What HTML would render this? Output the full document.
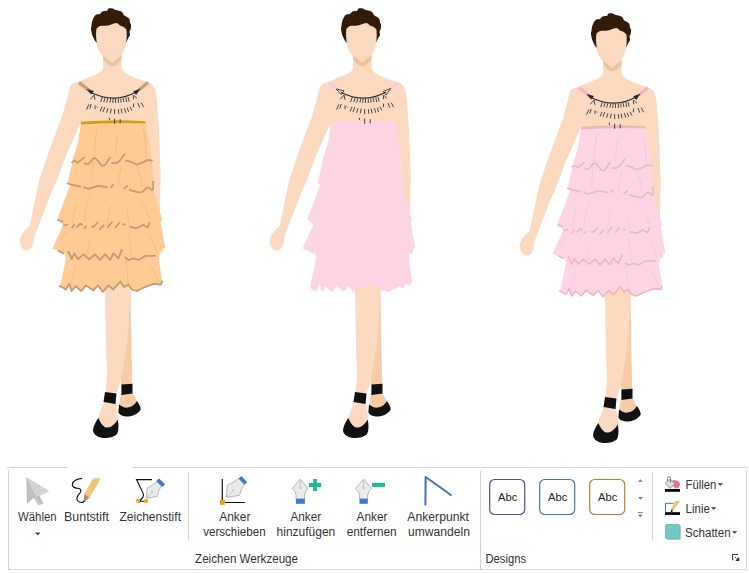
<!DOCTYPE html>
<html><head><meta charset="utf-8">
<style>
html,body{margin:0;padding:0;background:#fff;width:749px;height:573px;overflow:hidden;position:relative;font-family:"Liberation Sans",sans-serif;}
#figs{position:absolute;left:0;top:0;}
.rb{position:absolute;background:#d4d4d4;}
svg.ic{position:absolute;}
</style></head><body>
<svg id="figs" width="749" height="460" viewBox="0 0 749 460">

<g>
  <path fill="#FBDABF" d="M70,86.5 L68.4,93 L62.8,114 L47.7,155 L39.3,180 L29.6,226 C25,230 20,235 19.8,241 C20,247 23,250.5 26.8,250.5 C30,250.5 33,247 33.5,243 L34.6,236 L50,196 L57,180 L65,158 L81,122 L95,110 L88,90 Z"/>
  <path fill="#FBDABF" d="M70,86.5 C71,84.5 72.5,83.6 74.5,83 L78,82 L85,79 C90,77 95,75 98,73.5 C101,72 103,70 103.2,67 L103,50 L121.5,50 L121.6,67 C122,70 124,72.5 127,74 L135,78 L147,82 C151,83 153,85 154.5,88 C156.5,93 157,100 157.5,108 L159,130 L160.6,175 L160,215 L159,245 C161.5,245.3 163.2,248 163.2,250.5 C162.8,253.2 160,254.2 157,253.5 L150,250 L81,122 Z"/>
  <path fill="#FBDABF" d="M96.2,22 L126.5,22 C127.3,32 127,40 125.8,45.5 C124.6,50 122.6,53 120.6,55.2 L113.5,61.8 C112.7,62.6 111.7,62.6 110.9,61.9 L103,56 C100.5,53.5 98.8,51 97.8,48.5 C96.3,44 95.8,36 96.2,22 Z"/>
  <path fill="#E8C39D" d="M103,55.5 L110.9,61.9 C111.7,62.6 112.7,62.6 113.5,61.8 L121.5,54.8 L121.6,59.5 C119.5,62 116.5,66.3 112.3,66.4 C108.5,66.3 105.5,62 103.2,59 Z"/>
  <path fill="#331B09" d="M108.4,8.6 C110,8 111,8.2 112,8.3 C113.5,8.5 114,9.3 115,9.8 C116.5,10.4 118,10.3 119.2,10.7 C120.7,11.2 121.6,11.6 122.3,12.2 C123.5,13.4 123.3,14.6 124,15.2 C125,16 126.3,16.3 127,17 C128.5,17.8 129.2,18.5 129.5,19.4 C130,20.5 129.7,21.6 130,22.4 C130.4,23.3 131,24 131,24.8 C131.2,26.3 130.8,27.8 130.7,29 C130.6,30 129.6,30.7 129.5,31.4 C129.5,32.5 130.2,34 130,35 C129.8,36.3 128.8,37 128.3,37.8 L126.2,42.7 C126.8,38 126.8,33 126.5,30 C126,28.5 125.5,28.4 125.3,28.4 C124.5,27.5 123.5,27 122.9,26.6 C121.5,26.2 120.5,25.8 119.9,25.4 C118.5,24.2 117.5,23 116.2,23 C113,23.3 110.5,25 107.8,25.4 C104.5,25.7 102,25.5 100,26 C98,27 97,28 96.4,29 C95.8,33 96,38 96.9,43 L94.8,40.6 C93.8,38.5 93,37 92.2,35 C91.8,34 91.6,33 91.6,32 C91.2,31 91,30 91,29 C91,27.5 91.6,26 91.6,24.8 C91.6,23.5 91.9,22.3 92.2,21.2 C92.6,20 93,19 93.4,18.2 C94.2,16.8 95.3,15.2 96.4,14.6 C97.6,14 99,14.6 100,14 C101,13.3 101.4,12.2 102.4,11.6 C103.8,10.8 106,11.3 107.2,10.7 C107.8,10.2 107.8,9 108.4,8.6 Z"/>
  <path fill="#F6CCA8" d="M119.5,280 L130.2,280 L131.2,335 L132.2,385 L121,385 L120.5,360 Z"/>
  <path fill="#FBDABF" d="M104.8,280 L129.8,280 L129.6,305 C129.3,325 127,345 123.5,365 L120.1,383.4 L116.5,393 L105.5,393 L107,375 L106,345 Z"/>
  <path fill="#F6CCA8" d="M121,393 L132.5,393 L137,401.5 L128,409.5 L119,405.5 Z"/>
  <path fill="#FBDABF" d="M104,402 L116,403 L118.5,420.5 L107.3,429 L97.6,419 Z"/>
  <path fill="#111" d="M105,392 L116.5,393.5 L115.5,404 L103.5,402 Z"/>
  <path fill="#111" d="M121.4,384.5 L132.5,383.8 L132.5,393.4 L121.4,395 Z"/>
  <path fill="#111" d="M119,404.5 C122,407 125,408 128,407.5 C132,407 135,404 137,401 C139,404 141,407 140.7,409.5 C139,413 134,416 128,416.5 C123,416.5 119,415 118.4,412 Z"/>
  <path fill="#111" d="M98.4,418 C101,424 104,427.5 107.3,427.6 C111,427.5 115,424 117.7,419.4 C118.8,424 119,430 117,434.3 C113,437.5 108,438.5 102.8,438 C97,437 93,434 93,430 C93.5,426 96,421 98.4,418 Z"/>

<path stroke="#C9A07A" stroke-width="3.3" d="M79,82.6 L90,91 M148,82.6 L139,90"/>
<path fill="none" stroke="#2a2a2a" stroke-width="1.1" d="M91,92.5 Q114.6,104 136,92"/>
  <path fill="#2a2a2a" d="M86.3,89 L94,90.9 L91.2,94.6 Z M140.7,88.5 L133.3,91.3 L136.1,95.1 Z"/>
  <path stroke="#2a2a2a" stroke-width="0.85" fill="none" d="M90.3,99.3 L94,95.1 L95,99.8 M102.4,97 L100.6,102.1 M105.2,97.4 L103.8,102.1 M108,97.9 L106.6,102.6 M110.8,98.4 L109.9,102.6 M113.2,98.6 L112.7,103 M115.5,98.6 L115.5,103 M118.3,98.4 L118.3,103 M120.7,98.4 L121.1,102.6 M123,97.9 L123.9,102.1 M125.8,97.4 L126.7,102.1 M128.1,97 L129.1,101.6 M133.3,95.1 L133.7,99.3 M134.2,95.6 L137,98.4 M88.9,104.4 L86.5,109.6 M91.2,104 L89.8,108.6 M95,105.4 L95,109.1 M96.8,106.5 L97.3,107.5 M102,106.8 L100.1,111.4 M104.8,107.2 L102.9,111.9 M108,108.2 L106.6,112.8 M111.3,108.6 L110.4,113.3 M114.6,109.1 L114.6,114.2 M118.3,109.1 L118.8,113.8 M121.1,108.6 L122.1,113.3 M124.4,108.2 L125.8,112.8 M127.2,107.7 L128.6,111.9 M130,106.8 L131.9,110.5 M133.7,103.5 L133.3,107.2 M137.9,103 L139.8,107.7 M141.2,102.6 L143.6,107.2 "/>
<path fill="#FECB94" d="M64,245 L160,245 L159,261.4 L162.2,281.4 L160.6,284.6 L154.2,283.8 L149.4,285.4 L143,287.9 L136.5,291 L131.7,289.5 L128.5,284.6 L123.7,287 L120.5,281.4 L113.3,289.5 L108.5,285.4 L102.9,291.9 L98,285.4 L93.3,290.3 L86,285.4 L81.3,291 L75.6,286.2 L71.6,291 L69.2,283.8 L66,289.5 L63.6,287.9 L59.6,286.2 L60.4,285.4 L66,258.2 Z"/>
<path fill="#FECB94" d="M64,212 L158,212 L160.2,220 L165.2,247.5 L160,250 L155.2,255.9 L145.2,255.9 L138.5,260 L133.5,258.4 L128.5,260 L125.1,257.6 L121.8,250 L118.4,258.4 L113.4,253.4 L110.1,260 L105.1,254.2 L100.1,260 L95.1,254.2 L89.2,259.2 L83.4,254.2 L78.4,259.2 L74.2,253.4 L71.7,259.2 L68.4,251.7 L63.4,253.4 L58.4,250.9 L52.5,248.4 L63.4,225 Z"/>
<path fill="#FECB94" d="M72,178 L151,178 L153.5,190 L162.2,220.3 L159,222.7 L149.4,222.7 L147.8,227.5 L143,225 L136.5,228.3 L130.1,226.7 L123.7,224.3 L119.7,222.7 L115.7,227.5 L112.5,221.9 L107.7,227.5 L101.3,229 L96.5,221.9 L91.7,226 L84.5,227.5 L80.4,228.3 L77.2,223.5 L72.4,228 L66,226.7 L62.8,224.3 L57.2,219.5 L69.2,188 Z"/>
<path fill="#FECB94" d="M76,150 L150,150 L152,163 L153.2,181.6 L152.5,189.9 L147.4,187.3 L141.1,192.4 L129.7,189.9 L127.2,186 L124,188.6 L112,186 L106.9,187.3 L98,186 L89.1,188.6 L84,187.3 L80.2,186.7 L72.6,184.8 L67.5,183.5 L72,164 Z"/>
<path fill="#FECB94" d="M80.7,121.5 L145.5,121.5 L146,125 L151.9,160.7 L147.4,160 L142.4,162.6 L136.7,164.5 L131,162 L125.9,160.7 L124.6,154.3 L118.3,162 L112,163.2 L110,157.5 L103,165.8 L94.8,158.1 L88.5,163.9 L84.7,163.2 L84,157.5 L77.7,162.6 L75.1,160.7 L72,162 L78.2,142 L80.7,125 Z"/>
<path fill="none" stroke="#E8B283" stroke-width="0.6" d="M94.8,148 Q92,165 91.6,182.2 M117,136 Q116,146 115.7,155.6 M121.4,165.8 Q119,176 118.3,186 M137.3,167 Q141,177 142.4,187.3 M143.5,128 Q145.5,140 146.2,158 M97,128 Q95,138 94.8,148 M76.4,204.2 Q73,213 72.4,223.5 M90.9,194.6 Q85,207 83.7,221.9 M110.9,205.8 Q108,215 107.7,225 M126.9,210.6 Q128.5,217 128.5,223.5 M141.3,201 Q147,209 149.4,218.7 M66,232 Q62,236 61.7,240 M90,240 Q88,247 87.6,254.2 M128.5,233.4 Q130.5,244 131,255.9 M148.5,235 Q155,243 156.9,253.4 M75.6,267.8 Q72,275 70.8,283.8 M125.3,259.8 Q128,272 128.5,285.4 M149.4,264.6 Q156,272 159,282.2"/>
<path fill="none" stroke="#C59A75" stroke-width="1.8" stroke-linejoin="round" stroke-linecap="round" d="M72.0,162.0 C72.52,161.78 74.15,160.60 75.1,160.7 C76.05,160.80 76.22,163.13 77.7,162.6 C79.18,162.07 82.95,158.35 84.0,157.5"/>
<path fill="none" stroke="#C59A75" stroke-width="1.8" stroke-linejoin="round" stroke-linecap="round" d="M84.7,163.2 C85.33,163.32 86.82,164.75 88.5,163.9 C90.18,163.05 92.38,157.78 94.8,158.1 C97.22,158.42 100.47,165.90 103.0,165.8 C105.53,165.70 108.83,158.88 110.0,157.5"/>
<path fill="none" stroke="#C59A75" stroke-width="1.8" stroke-linejoin="round" stroke-linecap="round" d="M112.0,163.2 C113.05,163.00 116.20,163.48 118.3,162.0 C120.40,160.52 123.55,155.58 124.6,154.3"/>
<path fill="none" stroke="#C59A75" stroke-width="1.8" stroke-linejoin="round" stroke-linecap="round" d="M125.9,160.7 C126.75,160.92 129.20,161.37 131.0,162.0 C132.80,162.63 134.80,164.40 136.7,164.5 C138.60,164.60 140.62,163.35 142.4,162.6 C144.18,161.85 145.82,160.32 147.4,160.0 C148.98,159.68 151.15,160.58 151.9,160.7"/>
<path fill="none" stroke="#C59A75" stroke-width="1.8" stroke-linejoin="round" stroke-linecap="round" d="M67.5,183.5 C68.35,183.72 70.48,184.27 72.6,184.8 C74.72,185.33 78.93,186.38 80.2,186.7"/>
<path fill="none" stroke="#C59A75" stroke-width="1.8" stroke-linejoin="round" stroke-linecap="round" d="M84.0,187.3 C84.85,187.52 86.77,188.82 89.1,188.6 C91.43,188.38 95.03,186.22 98.0,186.0 C100.97,185.78 105.42,187.08 106.9,187.3"/>
<path fill="none" stroke="#C59A75" stroke-width="1.8" stroke-linejoin="round" stroke-linecap="round" d="M111.0,187.3 L113.0,185.0"/>
<path fill="none" stroke="#C59A75" stroke-width="1.8" stroke-linejoin="round" stroke-linecap="round" d="M124.0,188.6 L127.2,186.0"/>
<path fill="none" stroke="#C59A75" stroke-width="1.8" stroke-linejoin="round" stroke-linecap="round" d="M129.7,189.9 C131.60,190.32 138.15,192.83 141.1,192.4 C144.05,191.97 145.50,187.72 147.4,187.3 C149.30,186.88 151.53,190.85 152.5,189.9 C153.47,188.95 153.08,182.98 153.2,181.6"/>
<polyline fill="none" stroke="#C59A75" stroke-width="1.8" stroke-linejoin="round" stroke-linecap="round" points="58,220 62.5,221.5"/>
<polyline fill="none" stroke="#C59A75" stroke-width="1.8" stroke-linejoin="round" stroke-linecap="round" points="63.8,225.5 67.5,224.5"/>
<polyline fill="none" stroke="#C59A75" stroke-width="1.8" stroke-linejoin="round" stroke-linecap="round" points="72.3,227.6 74.2,224.8"/>
<polyline fill="none" stroke="#C59A75" stroke-width="1.8" stroke-linejoin="round" stroke-linecap="round" points="77,227.1 80.2,223.4 82.1,224.8"/>
<polyline fill="none" stroke="#C59A75" stroke-width="1.8" stroke-linejoin="round" stroke-linecap="round" points="84.4,228.1 85.8,226.7"/>
<polyline fill="none" stroke="#C59A75" stroke-width="1.8" stroke-linejoin="round" stroke-linecap="round" points="91.9,226.7 93.5,227 97.5,222.5"/>
<polyline fill="none" stroke="#C59A75" stroke-width="1.8" stroke-linejoin="round" stroke-linecap="round" points="99.9,229 103.6,225.3"/>
<polyline fill="none" stroke="#C59A75" stroke-width="1.8" stroke-linejoin="round" stroke-linecap="round" points="107.8,227.1 112,222"/>
<polyline fill="none" stroke="#C59A75" stroke-width="1.8" stroke-linejoin="round" stroke-linecap="round" points="115.7,227.1 119.5,222.5"/>
<polyline fill="none" stroke="#C59A75" stroke-width="1.8" stroke-linejoin="round" stroke-linecap="round" points="123.5,224.5 125,224.3"/>
<polyline fill="none" stroke="#C59A75" stroke-width="1.8" stroke-linejoin="round" stroke-linecap="round" points="130.1,226.7 136.5,228.3 143,225 147.8,227.5 149.4,222.7"/>
<polyline fill="none" stroke="#C59A75" stroke-width="1.8" stroke-linejoin="round" stroke-linecap="round" points="58.4,250.9 63.4,253.4"/>
<polyline fill="none" stroke="#C59A75" stroke-width="1.8" stroke-linejoin="round" stroke-linecap="round" points="68.4,251.7 71.7,259.2 74.2,253.4 78.4,259.2 83.4,254.2 89.2,259.2 95.1,254.2 100.1,260 105.1,254.2 110.1,260 113.4,253.4 118.4,258.4 121.8,250"/>
<polyline fill="none" stroke="#C59A75" stroke-width="1.8" stroke-linejoin="round" stroke-linecap="round" points="125.1,257.6 128.5,260 133.5,258.4 138.5,260 145.2,255.9 155.2,255.9"/>
<polyline fill="none" stroke="#C59A75" stroke-width="1.8" stroke-linejoin="round" stroke-linecap="round" points="162.2,281.4 160.6,284.6 154.2,283.8 149.4,285.4 143,287.9 136.5,291 131.7,289.5 128.5,284.6 123.7,287 120.5,281.4 113.3,289.5 108.5,285.4 102.9,291.9 98,285.4 93.3,290.3 86,285.4 81.3,291 75.6,286.2 71.6,291 69.2,283.8 66,289.5 63.6,287.9 59.6,286.2"/>
<path fill="#D4A012" d="M80.9,121.7 Q114.6,118.8 145.4,121.3 L145.4,123.6 Q114.6,122.2 80.9,124.6 Z"/>

<path stroke="#2a2a2a" stroke-width="0.85" fill="none" d="M109.4,117.8 L109.4,120 M114.6,118.6 L114.6,123.8 M120.2,119.2 L120.2,123.3"/></g>
<g transform="translate(250,0)">
  <path fill="#FBDABF" d="M70,86.5 L68.4,93 L62.8,114 L47.7,155 L39.3,180 L29.6,226 C25,230 20,235 19.8,241 C20,247 23,250.5 26.8,250.5 C30,250.5 33,247 33.5,243 L34.6,236 L50,196 L57,180 L65,158 L81,122 L95,110 L88,90 Z"/>
  <path fill="#FBDABF" d="M70,86.5 C71,84.5 72.5,83.6 74.5,83 L78,82 L85,79 C90,77 95,75 98,73.5 C101,72 103,70 103.2,67 L103,50 L121.5,50 L121.6,67 C122,70 124,72.5 127,74 L135,78 L147,82 C151,83 153,85 154.5,88 C156.5,93 157,100 157.5,108 L159,130 L160.6,175 L160,215 L159,245 C161.5,245.3 163.2,248 163.2,250.5 C162.8,253.2 160,254.2 157,253.5 L150,250 L81,122 Z"/>
  <path fill="#FBDABF" d="M96.2,22 L126.5,22 C127.3,32 127,40 125.8,45.5 C124.6,50 122.6,53 120.6,55.2 L113.5,61.8 C112.7,62.6 111.7,62.6 110.9,61.9 L103,56 C100.5,53.5 98.8,51 97.8,48.5 C96.3,44 95.8,36 96.2,22 Z"/>
  <path fill="#E8C39D" d="M103,55.5 L110.9,61.9 C111.7,62.6 112.7,62.6 113.5,61.8 L121.5,54.8 L121.6,59.5 C119.5,62 116.5,66.3 112.3,66.4 C108.5,66.3 105.5,62 103.2,59 Z"/>
  <path fill="#331B09" d="M108.4,8.6 C110,8 111,8.2 112,8.3 C113.5,8.5 114,9.3 115,9.8 C116.5,10.4 118,10.3 119.2,10.7 C120.7,11.2 121.6,11.6 122.3,12.2 C123.5,13.4 123.3,14.6 124,15.2 C125,16 126.3,16.3 127,17 C128.5,17.8 129.2,18.5 129.5,19.4 C130,20.5 129.7,21.6 130,22.4 C130.4,23.3 131,24 131,24.8 C131.2,26.3 130.8,27.8 130.7,29 C130.6,30 129.6,30.7 129.5,31.4 C129.5,32.5 130.2,34 130,35 C129.8,36.3 128.8,37 128.3,37.8 L126.2,42.7 C126.8,38 126.8,33 126.5,30 C126,28.5 125.5,28.4 125.3,28.4 C124.5,27.5 123.5,27 122.9,26.6 C121.5,26.2 120.5,25.8 119.9,25.4 C118.5,24.2 117.5,23 116.2,23 C113,23.3 110.5,25 107.8,25.4 C104.5,25.7 102,25.5 100,26 C98,27 97,28 96.4,29 C95.8,33 96,38 96.9,43 L94.8,40.6 C93.8,38.5 93,37 92.2,35 C91.8,34 91.6,33 91.6,32 C91.2,31 91,30 91,29 C91,27.5 91.6,26 91.6,24.8 C91.6,23.5 91.9,22.3 92.2,21.2 C92.6,20 93,19 93.4,18.2 C94.2,16.8 95.3,15.2 96.4,14.6 C97.6,14 99,14.6 100,14 C101,13.3 101.4,12.2 102.4,11.6 C103.8,10.8 106,11.3 107.2,10.7 C107.8,10.2 107.8,9 108.4,8.6 Z"/>
  <path fill="#F6CCA8" d="M119.5,280 L130.2,280 L131.2,335 L132.2,385 L121,385 L120.5,360 Z"/>
  <path fill="#FBDABF" d="M104.8,280 L129.8,280 L129.6,305 C129.3,325 127,345 123.5,365 L120.1,383.4 L116.5,393 L105.5,393 L107,375 L106,345 Z"/>
  <path fill="#F6CCA8" d="M121,393 L132.5,393 L137,401.5 L128,409.5 L119,405.5 Z"/>
  <path fill="#FBDABF" d="M104,402 L116,403 L118.5,420.5 L107.3,429 L97.6,419 Z"/>
  <path fill="#111" d="M105,392 L116.5,393.5 L115.5,404 L103.5,402 Z"/>
  <path fill="#111" d="M121.4,384.5 L132.5,383.8 L132.5,393.4 L121.4,395 Z"/>
  <path fill="#111" d="M119,404.5 C122,407 125,408 128,407.5 C132,407 135,404 137,401 C139,404 141,407 140.7,409.5 C139,413 134,416 128,416.5 C123,416.5 119,415 118.4,412 Z"/>
  <path fill="#111" d="M98.4,418 C101,424 104,427.5 107.3,427.6 C111,427.5 115,424 117.7,419.4 C118.8,424 119,430 117,434.3 C113,437.5 108,438.5 102.8,438 C97,437 93,434 93,430 C93.5,426 96,421 98.4,418 Z"/>

<path stroke="#FBCBDC" stroke-width="3.3" d="M79,82.6 L90,91 M148,82.6 L139,90"/>
<path fill="none" stroke="#2a2a2a" stroke-width="1.1" d="M91,92.5 Q114.6,104 136,92"/>
  <path fill="none" stroke="#2a2a2a" stroke-width="0.8" stroke-linejoin="round" d="M86.3,89 L94,90.9 L91.2,94.6 Z M140.7,88.5 L133.3,91.3 L136.1,95.1 Z"/>
  <path stroke="#2a2a2a" stroke-width="0.85" fill="none" d="M90.3,99.3 L94,95.1 L95,99.8 M102.4,97 L100.6,102.1 M105.2,97.4 L103.8,102.1 M108,97.9 L106.6,102.6 M110.8,98.4 L109.9,102.6 M113.2,98.6 L112.7,103 M115.5,98.6 L115.5,103 M118.3,98.4 L118.3,103 M120.7,98.4 L121.1,102.6 M123,97.9 L123.9,102.1 M125.8,97.4 L126.7,102.1 M128.1,97 L129.1,101.6 M133.3,95.1 L133.7,99.3 M134.2,95.6 L137,98.4 M88.9,104.4 L86.5,109.6 M91.2,104 L89.8,108.6 M95,105.4 L95,109.1 M96.8,106.5 L97.3,107.5 M102,106.8 L100.1,111.4 M104.8,107.2 L102.9,111.9 M108,108.2 L106.6,112.8 M111.3,108.6 L110.4,113.3 M114.6,109.1 L114.6,114.2 M118.3,109.1 L118.8,113.8 M121.1,108.6 L122.1,113.3 M124.4,108.2 L125.8,112.8 M127.2,107.7 L128.6,111.9 M130,106.8 L131.9,110.5 M133.7,103.5 L133.3,107.2 M137.9,103 L139.8,107.7 M141.2,102.6 L143.6,107.2 "/>
<path fill="#FDD5E4" d="M64,245 L160,245 L159,261.4 L162.2,281.7 L160.6,284 L158,285.5 L155.8,283.3 L153.5,288.5 L149.4,286.5 L146,288.5 L143.8,289 L140.5,290.8 L138,292.3 L134.8,290.2 L131.7,291.5 L130,287 L128.5,284.9 L125.8,287.8 L123.7,288.3 L121.8,285 L120.5,282.5 L116,286.5 L111.7,288.5 L109.6,286.3 L107.7,285.5 L105.8,289.5 L103,293 L100.8,288.5 L98,286.3 L95.8,289.5 L93.3,291.5 L89.8,288.5 L86,286.3 L84.2,289.5 L82,292.3 L78.8,289.3 L75.6,286.3 L73.8,289.5 L71.6,291.5 L70.6,287.5 L69.2,283.8 L67.8,288.5 L66,291.5 L64,290.5 L62,289.7 L59.6,286.5 L60.4,285.4 L66,258.2 Z"/>
<path fill="#FDD5E4" d="M64,212 L158,212 L160.2,220 L165.2,247.5 L160,250 L155.2,255.9 L145.2,255.9 L138.5,260 L133.5,258.4 L128.5,260 L125.1,257.6 L121.8,250 L118.4,258.4 L113.4,253.4 L110.1,260 L105.1,254.2 L100.1,260 L95.1,254.2 L89.2,259.2 L83.4,254.2 L78.4,259.2 L74.2,253.4 L71.7,259.2 L68.4,251.7 L63.4,253.4 L58.4,250.9 L52.5,248.4 L63.4,225 Z"/>
<path fill="#FDD5E4" d="M72,178 L151,178 L153.5,190 L162.2,220.3 L159,222.7 L149.4,222.7 L147.8,227.5 L143,225 L136.5,228.3 L130.1,226.7 L123.7,224.3 L119.7,222.7 L115.7,227.5 L112.5,221.9 L107.7,227.5 L101.3,229 L96.5,221.9 L91.7,226 L84.5,227.5 L80.4,228.3 L77.2,223.5 L72.4,228 L66,226.7 L62.8,224.3 L57.2,219.5 L69.2,188 Z"/>
<path fill="#FDD5E4" d="M76,150 L150,150 L152,163 L153.2,181.6 L152.5,189.9 L147.4,187.3 L141.1,192.4 L129.7,189.9 L127.2,186 L124,188.6 L112,186 L106.9,187.3 L98,186 L89.1,188.6 L84,187.3 L80.2,186.7 L72.6,184.8 L67.5,183.5 L72,164 Z"/>
<path fill="#FDD5E4" d="M80.7,121.5 L145.5,121.5 L146,125 L151.9,160.7 L147.4,160 L142.4,162.6 L136.7,164.5 L131,162 L125.9,160.7 L124.6,154.3 L118.3,162 L112,163.2 L110,157.5 L103,165.8 L94.8,158.1 L88.5,163.9 L84.7,163.2 L84,157.5 L77.7,162.6 L75.1,160.7 L72,162 L78.2,142 L80.7,125 Z"/>

<path fill="#FDD5E4" d="M79.5,122.4 Q114.4,119.6 145,121.7 L146,126 L80,126 Z"/>
<path stroke="#2a2a2a" stroke-width="0.85" fill="none" d="M109.4,117.8 L109.4,120 M114.6,118.6 L114.6,123.8 M120.2,119.2 L120.2,123.3"/></g>
<g transform="translate(500,5)">
  <path fill="#FBDABF" d="M70,86.5 L68.4,93 L62.8,114 L47.7,155 L39.3,180 L29.6,226 C25,230 20,235 19.8,241 C20,247 23,250.5 26.8,250.5 C30,250.5 33,247 33.5,243 L34.6,236 L50,196 L57,180 L65,158 L81,122 L95,110 L88,90 Z"/>
  <path fill="#FBDABF" d="M70,86.5 C71,84.5 72.5,83.6 74.5,83 L78,82 L85,79 C90,77 95,75 98,73.5 C101,72 103,70 103.2,67 L103,50 L121.5,50 L121.6,67 C122,70 124,72.5 127,74 L135,78 L147,82 C151,83 153,85 154.5,88 C156.5,93 157,100 157.5,108 L159,130 L160.6,175 L160,215 L159,245 C161.5,245.3 163.2,248 163.2,250.5 C162.8,253.2 160,254.2 157,253.5 L150,250 L81,122 Z"/>
  <path fill="#FBDABF" d="M96.2,22 L126.5,22 C127.3,32 127,40 125.8,45.5 C124.6,50 122.6,53 120.6,55.2 L113.5,61.8 C112.7,62.6 111.7,62.6 110.9,61.9 L103,56 C100.5,53.5 98.8,51 97.8,48.5 C96.3,44 95.8,36 96.2,22 Z"/>
  <path fill="#E8C39D" d="M103,55.5 L110.9,61.9 C111.7,62.6 112.7,62.6 113.5,61.8 L121.5,54.8 L121.6,59.5 C119.5,62 116.5,66.3 112.3,66.4 C108.5,66.3 105.5,62 103.2,59 Z"/>
  <path fill="#331B09" d="M108.4,8.6 C110,8 111,8.2 112,8.3 C113.5,8.5 114,9.3 115,9.8 C116.5,10.4 118,10.3 119.2,10.7 C120.7,11.2 121.6,11.6 122.3,12.2 C123.5,13.4 123.3,14.6 124,15.2 C125,16 126.3,16.3 127,17 C128.5,17.8 129.2,18.5 129.5,19.4 C130,20.5 129.7,21.6 130,22.4 C130.4,23.3 131,24 131,24.8 C131.2,26.3 130.8,27.8 130.7,29 C130.6,30 129.6,30.7 129.5,31.4 C129.5,32.5 130.2,34 130,35 C129.8,36.3 128.8,37 128.3,37.8 L126.2,42.7 C126.8,38 126.8,33 126.5,30 C126,28.5 125.5,28.4 125.3,28.4 C124.5,27.5 123.5,27 122.9,26.6 C121.5,26.2 120.5,25.8 119.9,25.4 C118.5,24.2 117.5,23 116.2,23 C113,23.3 110.5,25 107.8,25.4 C104.5,25.7 102,25.5 100,26 C98,27 97,28 96.4,29 C95.8,33 96,38 96.9,43 L94.8,40.6 C93.8,38.5 93,37 92.2,35 C91.8,34 91.6,33 91.6,32 C91.2,31 91,30 91,29 C91,27.5 91.6,26 91.6,24.8 C91.6,23.5 91.9,22.3 92.2,21.2 C92.6,20 93,19 93.4,18.2 C94.2,16.8 95.3,15.2 96.4,14.6 C97.6,14 99,14.6 100,14 C101,13.3 101.4,12.2 102.4,11.6 C103.8,10.8 106,11.3 107.2,10.7 C107.8,10.2 107.8,9 108.4,8.6 Z"/>
  <path fill="#F6CCA8" d="M119.5,280 L130.2,280 L131.2,335 L132.2,385 L121,385 L120.5,360 Z"/>
  <path fill="#FBDABF" d="M104.8,280 L129.8,280 L129.6,305 C129.3,325 127,345 123.5,365 L120.1,383.4 L116.5,393 L105.5,393 L107,375 L106,345 Z"/>
  <path fill="#F6CCA8" d="M121,393 L132.5,393 L137,401.5 L128,409.5 L119,405.5 Z"/>
  <path fill="#FBDABF" d="M104,402 L116,403 L118.5,420.5 L107.3,429 L97.6,419 Z"/>
  <path fill="#111" d="M105,392 L116.5,393.5 L115.5,404 L103.5,402 Z"/>
  <path fill="#111" d="M121.4,384.5 L132.5,383.8 L132.5,393.4 L121.4,395 Z"/>
  <path fill="#111" d="M119,404.5 C122,407 125,408 128,407.5 C132,407 135,404 137,401 C139,404 141,407 140.7,409.5 C139,413 134,416 128,416.5 C123,416.5 119,415 118.4,412 Z"/>
  <path fill="#111" d="M98.4,418 C101,424 104,427.5 107.3,427.6 C111,427.5 115,424 117.7,419.4 C118.8,424 119,430 117,434.3 C113,437.5 108,438.5 102.8,438 C97,437 93,434 93,430 C93.5,426 96,421 98.4,418 Z"/>

<path stroke="#F3B8C2" stroke-width="3.3" d="M79,82.6 L90,91 M148,82.6 L139,90"/>
<path fill="none" stroke="#2a2a2a" stroke-width="1.1" d="M91,92.5 Q114.6,104 136,92"/>
  <path fill="#2a2a2a" d="M86.3,89 L94,90.9 L91.2,94.6 Z M140.7,88.5 L133.3,91.3 L136.1,95.1 Z"/>
  <path stroke="#2a2a2a" stroke-width="0.85" fill="none" d="M90.3,99.3 L94,95.1 L95,99.8 M102.4,97 L100.6,102.1 M105.2,97.4 L103.8,102.1 M108,97.9 L106.6,102.6 M110.8,98.4 L109.9,102.6 M113.2,98.6 L112.7,103 M115.5,98.6 L115.5,103 M118.3,98.4 L118.3,103 M120.7,98.4 L121.1,102.6 M123,97.9 L123.9,102.1 M125.8,97.4 L126.7,102.1 M128.1,97 L129.1,101.6 M133.3,95.1 L133.7,99.3 M134.2,95.6 L137,98.4 M88.9,104.4 L86.5,109.6 M91.2,104 L89.8,108.6 M95,105.4 L95,109.1 M96.8,106.5 L97.3,107.5 M102,106.8 L100.1,111.4 M104.8,107.2 L102.9,111.9 M108,108.2 L106.6,112.8 M111.3,108.6 L110.4,113.3 M114.6,109.1 L114.6,114.2 M118.3,109.1 L118.8,113.8 M121.1,108.6 L122.1,113.3 M124.4,108.2 L125.8,112.8 M127.2,107.7 L128.6,111.9 M130,106.8 L131.9,110.5 M133.7,103.5 L133.3,107.2 M137.9,103 L139.8,107.7 M141.2,102.6 L143.6,107.2 "/>
<path fill="#FDD5E4" d="M64,245 L160,245 L159,261.4 L162.2,281.4 L160.6,284.6 L154.2,283.8 L149.4,285.4 L143,287.9 L136.5,291 L131.7,289.5 L128.5,284.6 L123.7,287 L120.5,281.4 L113.3,289.5 L108.5,285.4 L102.9,291.9 L98,285.4 L93.3,290.3 L86,285.4 L81.3,291 L75.6,286.2 L71.6,291 L69.2,283.8 L66,289.5 L63.6,287.9 L59.6,286.2 L60.4,285.4 L66,258.2 Z"/>
<path fill="#FDD5E4" d="M64,212 L158,212 L160.2,220 L165.2,247.5 L160,250 L155.2,255.9 L145.2,255.9 L138.5,260 L133.5,258.4 L128.5,260 L125.1,257.6 L121.8,250 L118.4,258.4 L113.4,253.4 L110.1,260 L105.1,254.2 L100.1,260 L95.1,254.2 L89.2,259.2 L83.4,254.2 L78.4,259.2 L74.2,253.4 L71.7,259.2 L68.4,251.7 L63.4,253.4 L58.4,250.9 L52.5,248.4 L63.4,225 Z"/>
<path fill="#FDD5E4" d="M72,178 L151,178 L153.5,190 L162.2,220.3 L159,222.7 L149.4,222.7 L147.8,227.5 L143,225 L136.5,228.3 L130.1,226.7 L123.7,224.3 L119.7,222.7 L115.7,227.5 L112.5,221.9 L107.7,227.5 L101.3,229 L96.5,221.9 L91.7,226 L84.5,227.5 L80.4,228.3 L77.2,223.5 L72.4,228 L66,226.7 L62.8,224.3 L57.2,219.5 L69.2,188 Z"/>
<path fill="#FDD5E4" d="M76,150 L150,150 L152,163 L153.2,181.6 L152.5,189.9 L147.4,187.3 L141.1,192.4 L129.7,189.9 L127.2,186 L124,188.6 L112,186 L106.9,187.3 L98,186 L89.1,188.6 L84,187.3 L80.2,186.7 L72.6,184.8 L67.5,183.5 L72,164 Z"/>
<path fill="#FDD5E4" d="M80.7,121.5 L145.5,121.5 L146,125 L151.9,160.7 L147.4,160 L142.4,162.6 L136.7,164.5 L131,162 L125.9,160.7 L124.6,154.3 L118.3,162 L112,163.2 L110,157.5 L103,165.8 L94.8,158.1 L88.5,163.9 L84.7,163.2 L84,157.5 L77.7,162.6 L75.1,160.7 L72,162 L78.2,142 L80.7,125 Z"/>
<path fill="none" stroke="#F3C2CD" stroke-width="0.6" d="M94.8,148 Q92,165 91.6,182.2 M117,136 Q116,146 115.7,155.6 M121.4,165.8 Q119,176 118.3,186 M137.3,167 Q141,177 142.4,187.3 M143.5,128 Q145.5,140 146.2,158 M97,128 Q95,138 94.8,148 M76.4,204.2 Q73,213 72.4,223.5 M90.9,194.6 Q85,207 83.7,221.9 M110.9,205.8 Q108,215 107.7,225 M126.9,210.6 Q128.5,217 128.5,223.5 M141.3,201 Q147,209 149.4,218.7 M66,232 Q62,236 61.7,240 M90,240 Q88,247 87.6,254.2 M128.5,233.4 Q130.5,244 131,255.9 M148.5,235 Q155,243 156.9,253.4 M75.6,267.8 Q72,275 70.8,283.8 M125.3,259.8 Q128,272 128.5,285.4 M149.4,264.6 Q156,272 159,282.2"/>
<path fill="none" stroke="#F2B4BA" stroke-width="1.5" stroke-linejoin="round" stroke-linecap="round" d="M72.0,162.0 C72.52,161.78 74.15,160.60 75.1,160.7 C76.05,160.80 76.22,163.13 77.7,162.6 C79.18,162.07 82.95,158.35 84.0,157.5"/>
<path fill="none" stroke="#F2B4BA" stroke-width="1.5" stroke-linejoin="round" stroke-linecap="round" d="M84.7,163.2 C85.33,163.32 86.82,164.75 88.5,163.9 C90.18,163.05 92.38,157.78 94.8,158.1 C97.22,158.42 100.47,165.90 103.0,165.8 C105.53,165.70 108.83,158.88 110.0,157.5"/>
<path fill="none" stroke="#F2B4BA" stroke-width="1.5" stroke-linejoin="round" stroke-linecap="round" d="M112.0,163.2 C113.05,163.00 116.20,163.48 118.3,162.0 C120.40,160.52 123.55,155.58 124.6,154.3"/>
<path fill="none" stroke="#F2B4BA" stroke-width="1.5" stroke-linejoin="round" stroke-linecap="round" d="M125.9,160.7 C126.75,160.92 129.20,161.37 131.0,162.0 C132.80,162.63 134.80,164.40 136.7,164.5 C138.60,164.60 140.62,163.35 142.4,162.6 C144.18,161.85 145.82,160.32 147.4,160.0 C148.98,159.68 151.15,160.58 151.9,160.7"/>
<path fill="none" stroke="#F2B4BA" stroke-width="1.5" stroke-linejoin="round" stroke-linecap="round" d="M67.5,183.5 C68.35,183.72 70.48,184.27 72.6,184.8 C74.72,185.33 78.93,186.38 80.2,186.7"/>
<path fill="none" stroke="#F2B4BA" stroke-width="1.5" stroke-linejoin="round" stroke-linecap="round" d="M84.0,187.3 C84.85,187.52 86.77,188.82 89.1,188.6 C91.43,188.38 95.03,186.22 98.0,186.0 C100.97,185.78 105.42,187.08 106.9,187.3"/>
<path fill="none" stroke="#F2B4BA" stroke-width="1.5" stroke-linejoin="round" stroke-linecap="round" d="M111.0,187.3 L113.0,185.0"/>
<path fill="none" stroke="#F2B4BA" stroke-width="1.5" stroke-linejoin="round" stroke-linecap="round" d="M124.0,188.6 L127.2,186.0"/>
<path fill="none" stroke="#F2B4BA" stroke-width="1.5" stroke-linejoin="round" stroke-linecap="round" d="M129.7,189.9 C131.60,190.32 138.15,192.83 141.1,192.4 C144.05,191.97 145.50,187.72 147.4,187.3 C149.30,186.88 151.53,190.85 152.5,189.9 C153.47,188.95 153.08,182.98 153.2,181.6"/>
<polyline fill="none" stroke="#F2B4BA" stroke-width="1.5" stroke-linejoin="round" stroke-linecap="round" points="58,220 62.5,221.5"/>
<polyline fill="none" stroke="#F2B4BA" stroke-width="1.5" stroke-linejoin="round" stroke-linecap="round" points="63.8,225.5 67.5,224.5"/>
<polyline fill="none" stroke="#F2B4BA" stroke-width="1.5" stroke-linejoin="round" stroke-linecap="round" points="72.3,227.6 74.2,224.8"/>
<polyline fill="none" stroke="#F2B4BA" stroke-width="1.5" stroke-linejoin="round" stroke-linecap="round" points="77,227.1 80.2,223.4 82.1,224.8"/>
<polyline fill="none" stroke="#F2B4BA" stroke-width="1.5" stroke-linejoin="round" stroke-linecap="round" points="84.4,228.1 85.8,226.7"/>
<polyline fill="none" stroke="#F2B4BA" stroke-width="1.5" stroke-linejoin="round" stroke-linecap="round" points="91.9,226.7 93.5,227 97.5,222.5"/>
<polyline fill="none" stroke="#F2B4BA" stroke-width="1.5" stroke-linejoin="round" stroke-linecap="round" points="99.9,229 103.6,225.3"/>
<polyline fill="none" stroke="#F2B4BA" stroke-width="1.5" stroke-linejoin="round" stroke-linecap="round" points="107.8,227.1 112,222"/>
<polyline fill="none" stroke="#F2B4BA" stroke-width="1.5" stroke-linejoin="round" stroke-linecap="round" points="115.7,227.1 119.5,222.5"/>
<polyline fill="none" stroke="#F2B4BA" stroke-width="1.5" stroke-linejoin="round" stroke-linecap="round" points="123.5,224.5 125,224.3"/>
<polyline fill="none" stroke="#F2B4BA" stroke-width="1.5" stroke-linejoin="round" stroke-linecap="round" points="130.1,226.7 136.5,228.3 143,225 147.8,227.5 149.4,222.7"/>
<polyline fill="none" stroke="#F2B4BA" stroke-width="1.5" stroke-linejoin="round" stroke-linecap="round" points="58.4,250.9 63.4,253.4"/>
<polyline fill="none" stroke="#F2B4BA" stroke-width="1.5" stroke-linejoin="round" stroke-linecap="round" points="68.4,251.7 71.7,259.2 74.2,253.4 78.4,259.2 83.4,254.2 89.2,259.2 95.1,254.2 100.1,260 105.1,254.2 110.1,260 113.4,253.4 118.4,258.4 121.8,250"/>
<polyline fill="none" stroke="#F2B4BA" stroke-width="1.5" stroke-linejoin="round" stroke-linecap="round" points="125.1,257.6 128.5,260 133.5,258.4 138.5,260 145.2,255.9 155.2,255.9"/>
<polyline fill="none" stroke="#F2B4BA" stroke-width="1.5" stroke-linejoin="round" stroke-linecap="round" points="162.2,281.4 160.6,284.6 154.2,283.8 149.4,285.4 143,287.9 136.5,291 131.7,289.5 128.5,284.6 123.7,287 120.5,281.4 113.3,289.5 108.5,285.4 102.9,291.9 98,285.4 93.3,290.3 86,285.4 81.3,291 75.6,286.2 71.6,291 69.2,283.8 66,289.5 63.6,287.9 59.6,286.2"/>
<path fill="#F2B3BB" d="M80.9,121.7 Q114.6,118.8 145.4,121.3 L145.4,123.6 Q114.6,122.2 80.9,124.6 Z"/>

<path stroke="#2a2a2a" stroke-width="0.85" fill="none" d="M109.4,117.8 L109.4,120 M114.6,118.6 L114.6,123.8 M120.2,119.2 L120.2,123.3"/></g>
</svg>
<!-- RIBBON -->
<div class="rb" style="left:7px;top:467px;width:61px;height:1px"></div>
<div class="rb" style="left:132px;top:467px;width:616px;height:1px"></div>
<div class="rb" style="left:8px;top:470px;width:1px;height:99px"></div>
<div class="rb" style="left:746px;top:470px;width:1px;height:99px"></div>
<div class="rb" style="left:8px;top:569px;width:739px;height:1px"></div>
<div class="rb" style="left:188px;top:472px;width:1px;height:68px"></div>
<div class="rb" style="left:480px;top:471px;width:1px;height:98px"></div>
<div class="rb" style="left:652px;top:472px;width:1px;height:68px"></div>
<svg class="ic" style="left:0;top:0" width="749" height="573" viewBox="0 0 749 573">
<g font-family="Liberation Sans" font-size="12" fill="#333333">
<text x="18" y="520.8" textLength="38.6" lengthAdjust="spacingAndGlyphs">Wählen</text>
<text x="64" y="520.8" textLength="45" lengthAdjust="spacingAndGlyphs">Buntstift</text>
<text x="119.4" y="520.8" textLength="61.6" lengthAdjust="spacingAndGlyphs">Zeichenstift</text>
<text x="219.2" y="520.8" textLength="31.2" lengthAdjust="spacingAndGlyphs">Anker</text>
<text x="203.2" y="536" textLength="62.4" lengthAdjust="spacingAndGlyphs">verschieben</text>
<text x="290.5" y="520.8" textLength="30.7" lengthAdjust="spacingAndGlyphs">Anker</text>
<text x="276.6" y="536" textLength="58.7" lengthAdjust="spacingAndGlyphs">hinzufügen</text>
<text x="356.6" y="520.8" textLength="30.9" lengthAdjust="spacingAndGlyphs">Anker</text>
<text x="346.7" y="536" textLength="49.9" lengthAdjust="spacingAndGlyphs">entfernen</text>
<text x="407.3" y="520.8" textLength="61.7" lengthAdjust="spacingAndGlyphs">Ankerpunkt</text>
<text x="408" y="536" textLength="62" lengthAdjust="spacingAndGlyphs">umwandeln</text>
<text x="195.1" y="562.8" textLength="102.9" lengthAdjust="spacingAndGlyphs">Zeichen Werkzeuge</text>
<text x="485.5" y="562.8" textLength="40.6" lengthAdjust="spacingAndGlyphs">Designs</text>
<text x="685.6" y="488.8" textLength="30.8" lengthAdjust="spacingAndGlyphs">Füllen</text>
<text x="685.6" y="512.7" textLength="24.3" lengthAdjust="spacingAndGlyphs">Linie</text>
<text x="685" y="537" textLength="45.7" lengthAdjust="spacingAndGlyphs">Schatten</text>
</g>
<!-- dropdown arrows -->
<g fill="#1F3A6E">
<path d="M35,532.5 L40.5,532.5 L37.75,535.2 Z"/>
<path d="M717.8,483.2 L723,483.2 L720.4,485.8 Z"/>
<path d="M711,507.2 L716.2,507.2 L713.6,509.8 Z"/>
<path d="M732,531.2 L737.2,531.2 L734.6,533.8 Z"/>
</g>
<!-- launcher -->
<path stroke="#1F3A6E" stroke-width="1.1" fill="none" d="M732.6,560.2 L732.6,554.5 L738,554.5"/>
<path fill="#1F3A6E" d="M735.2,561 L739.2,561 L739.2,557 Z"/><rect x="734.9" y="556.9" width="1.1" height="1.1" fill="#1F3A6E"/><rect x="736.6" y="558.4" width="2.6" height="2.6" fill="#1F3A6E"/>
<!-- arrow Wählen -->
<path fill="#BEBEBE" d="M26.3,477.3 L48.9,491 L39.4,495.7 L43.5,503.5 L38.2,505.2 L34,497.5 L26.9,504 Z"/>
<path fill="#D3D3D3" d="M26.3,477.3 L48.9,491 L39.4,495.7 L36.3,497 Z"/>
<path fill="#CCCCCC" d="M34,497.5 L36.3,497 L41.2,504.4 L38.2,505.2 Z"/>
<!-- Buntstift -->
<path fill="none" stroke="#111" stroke-width="1.2" stroke-linecap="round" d="M81.6,478.3 C77,479 72.5,481 72.3,484.5 C72.2,487.5 76,488.3 79,488.5 C81.5,489 81,491.5 80,492.8 C78,495 76.5,497 77,499.5 C77.5,502 80.5,502.8 83.3,502.2"/>
<path fill="#EFC77A" d="M93.2,478.3 L100.8,478.3 L89.9,497.2 L84.2,494.2 Z"/>
<path fill="#B98A6B" d="M84.2,494.2 L89.9,497.2 L83.6,502.4 Z"/>
<path fill="#111" d="M83.3,500.2 L85.6,501 L83.6,502.6 Z"/>
<!-- Zeichenstift -->
<path fill="none" stroke="#111" stroke-width="1.1" d="M151.9,479.6 L136.5,479.6 L142.5,492 C144,494.5 143.8,496.5 142,498.5 L139.9,500.5 M140,501.2 L144.2,501.2"/>
<rect x="136.3" y="499.2" width="3.7" height="3.6" fill="#F0A30A"/>
<rect x="144.2" y="499.2" width="3.7" height="3.6" fill="#F0A30A"/>
<path fill="#EBEBEB" stroke="#AFAFAF" stroke-width="0.9" stroke-linejoin="round" d="M146.3,498.3 L147.4,487.8 Q152,486.3 156.5,481.7 L161.3,486 Q157.8,491 157.4,496.3 Z"/>
<path fill="#3D7CC0" d="M156.2,481 L159,478.4 L165.2,484.2 L162.5,486.9 Z"/>
<path stroke="#BDBDBD" stroke-width="0.8" d="M146.8,497.6 L151.6,492.4"/>
<circle cx="152.2" cy="491.8" r="1.1" fill="#C4C4C4"/>
<!-- Anker verschieben -->
<path fill="none" stroke="#111" stroke-width="1.2" d="M222.3,479 L222.3,500 M224.8,502.5 L244.8,502.5"/>
<rect x="220" y="499.8" width="4.9" height="5" fill="#F0A30A"/>
<path fill="#EBEBEB" stroke="#AFAFAF" stroke-width="0.9" stroke-linejoin="round" d="M226.4,497.4 L227.3,485.1 Q233,483.2 238.9,478.5 L244.3,484.2 Q240.8,489 239.6,495.3 Z"/>
<path fill="#3D7CC0" d="M238.6,478.6 L241.4,476 L247.2,482.2 L244.6,484.8 Z"/>
<path stroke="#BDBDBD" stroke-width="0.8" d="M226.9,496.8 L232.6,491.2"/>
<circle cx="233.2" cy="490.6" r="1.1" fill="#C4C4C4"/>
<!-- Anker hinzufügen -->
<path fill="#EBEBEB" stroke="#AFAFAF" stroke-width="0.9" stroke-linejoin="round" d="M300.3,479.1 Q295,485 292.2,488.6 Q295.8,491 296.1,495 L296.1,499 L304.6,499 L304.6,495 Q304.8,491 307.9,488.6 Q305.4,485 300.3,479.1 Z"/>
<rect x="295.9" y="498.8" width="9" height="5" fill="#3D7CC0"/>
<path stroke="#BDBDBD" stroke-width="0.9" d="M300.3,480 L300.3,487.5"/>
<rect x="299" y="487.2" width="2.6" height="1.5" fill="#BDBDBD"/>
<path fill="#1DBB94" d="M313.2,479 L317.1,479 L317.1,482.9 L321.1,482.9 L321.1,486.9 L317.1,486.9 L317.1,490.9 L313.2,490.9 L313.2,486.9 L308.9,486.9 L308.9,482.9 L313.2,482.9 Z"/>
<!-- Anker entfernen -->
<path fill="#EBEBEB" stroke="#AFAFAF" stroke-width="0.9" stroke-linejoin="round" d="M363.6,479.1 Q358.3,485 355.5,488.6 Q359.1,491 359.6,495 L359.6,499 L367.6,499 L367.6,495 Q368.1,491 371.7,488.6 Q368.9,485 363.6,479.1 Z"/>
<rect x="359.5" y="498.8" width="8.3" height="5" fill="#3D7CC0"/>
<path stroke="#BDBDBD" stroke-width="0.9" d="M363.6,480 L363.6,487.5"/>
<rect x="362.3" y="487.2" width="2.6" height="1.5" fill="#BDBDBD"/>
<rect x="372" y="482.9" width="13" height="4" fill="#1DBB94"/>
<!-- Ankerpunkt umwandeln -->
<path fill="none" stroke="#3E74B5" stroke-width="2" stroke-linecap="round" stroke-linejoin="round" d="M425.4,504.5 L425.6,477 L451,495"/>
<!-- Abc boxes -->
<rect x="489.7" y="479.5" width="35" height="35" rx="5" fill="#fff" stroke="#5F4B8B" stroke-width="1.2"/>
<rect x="539.7" y="479.5" width="35" height="35" rx="5" fill="#fff" stroke="#3B7F92" stroke-width="1.2"/>
<rect x="589.7" y="479.5" width="35" height="35" rx="5" fill="#fff" stroke="#C87937" stroke-width="1.2"/>
<g font-family="Liberation Sans" font-size="10" fill="#222">
<text x="498" y="500.8" textLength="19.2" lengthAdjust="spacingAndGlyphs">Abc</text>
<text x="548" y="500.8" textLength="19.2" lengthAdjust="spacingAndGlyphs">Abc</text>
<text x="598" y="500.8" textLength="19.2" lengthAdjust="spacingAndGlyphs">Abc</text>
</g>
<!-- scroll arrows -->
<g fill="#7a7a7a">
<path d="M637.9,481.8 L642.8,481.8 L640.35,479.3 Z"/>
<path d="M637.9,497 L642.8,497 L640.35,499.7 Z"/>
<rect x="637.9" y="512" width="4.9" height="0.9"/>
<path d="M637.9,514.6 L642.8,514.6 L640.35,517.3 Z"/>
</g>
<!-- Fill icon -->
<rect x="665" y="489" width="15" height="2.8" fill="#000"/>
<path fill="#E3739F" d="M672.5,480.2 C675,479.6 678.8,480.6 679.9,483.5 C680.5,485.6 678.6,487.9 676.7,488.6 C675,488.4 673.7,487.4 673.4,486 Z"/>
<path fill="#DCDCDC" stroke="#777" stroke-width="0.8" stroke-linejoin="round" d="M669.4,479.5 L675.6,483.6 L670.1,488.3 L665.1,483.4 Z"/>
<path fill="none" stroke="#666" stroke-width="0.9" d="M667.4,481 L667.4,478.3 C667.4,476.3 670.6,476.3 670.6,478.3 L670.3,482.6"/>
<!-- Line icon -->
<rect x="665" y="512.2" width="15" height="2.7" fill="#000"/>
<path fill="none" stroke="#3E74B5" stroke-width="1" d="M665.5,512 L665.5,503.3 L673.5,503.3"/>
<path fill="#EFC77A" d="M675.3,501 L680.2,501 L673.9,509.4 L671.4,508 Z"/>
<path fill="#B98A6B" d="M671.4,508 L673.9,509.4 L671.4,511.2 Z"/>
<path fill="#111" d="M670.9,510 L672.6,510.5 L672.3,512.3 L670.9,512.3 Z"/>
<!-- Shadow swatch -->
<rect x="666.5" y="525.5" width="14.5" height="14.5" rx="1.5" fill="#cfcfcf"/>
<rect x="665.5" y="524.5" width="14.3" height="14.3" rx="1.5" fill="#72C9C4" stroke="#5BB8B2" stroke-width="0.8"/>
</svg>

</body></html>
